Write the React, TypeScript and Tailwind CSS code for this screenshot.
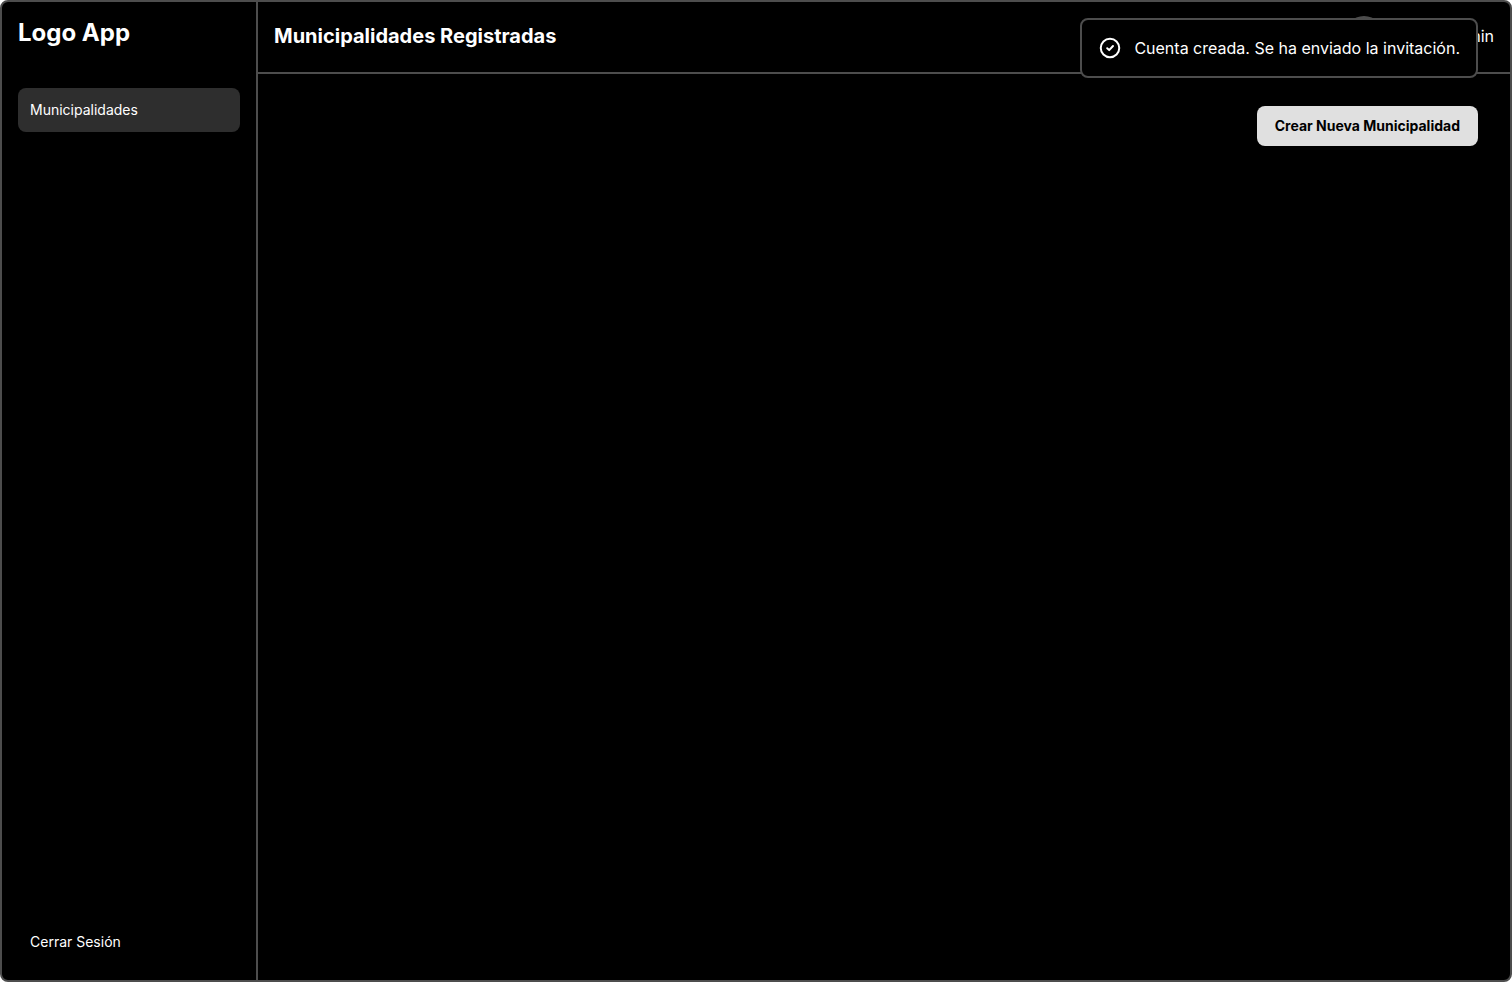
function CheckCircleIcon() {
  return (
    <svg
      aria-hidden="true"
      viewBox="0 0 24 24"
      className="size-6 shrink-0"
      fill="none"
      stroke="currentColor"
      strokeWidth="2"
      strokeLinecap="round"
      strokeLinejoin="round"
    >
      <circle cx="12" cy="12" r="9.25" />
      <path d="M9.2 12.2l2 1.9 3.8-4.1" />
    </svg>
  );
}

function Sidebar() {
  return (
    <aside className="flex w-64 shrink-0 flex-col border-r-2 border-[#4d4d4d] p-4">
      <div className="text-2xl font-bold leading-[30px]">Logo App</div>
      <nav className="mt-10">
        <a
          href="#municipalidades"
          aria-current="page"
          className="flex h-11 items-center rounded-lg bg-[#2e2e2e] px-3 text-sm"
        >
          Municipalidades
        </a>
      </nav>
      <button
        type="button"
        className="mt-auto flex h-11 items-center rounded-lg px-3 text-sm"
      >
        Cerrar Sesión
      </button>
    </aside>
  );
}

function Header() {
  return (
    <header className="flex h-18 shrink-0 items-center justify-between border-b-2 border-[#4d4d4d] px-4 pb-0.5">
      <h1 className="text-xl font-bold">Municipalidades Registradas</h1>
      <div className="flex items-center gap-3">
        <span className="size-10 rounded-full bg-[#4d4d4d]" />
        <span className="text-base">Super Admin</span>
      </div>
    </header>
  );
}

function Toast() {
  return (
    <div
      role="status"
      className="absolute right-8 top-4 flex h-15 items-center gap-3 rounded-lg border-2 border-[#4d4d4d] bg-black px-4 text-base"
    >
      <CheckCircleIcon />
      Cuenta creada. Se ha enviado la invitación.
    </div>
  );
}

export default function App() {
  return (
    <div className="min-h-screen bg-white font-['Inter',sans-serif] text-white">
      <div className="relative flex min-h-screen rounded-lg border-2 border-[#4d4d4d] bg-black">
        <Sidebar />
        <div className="flex min-w-0 flex-1 flex-col">
          <Header />
          <main className="flex flex-1 flex-col items-end p-8">
            <button
              type="button"
              className="h-10 rounded-lg bg-[#e0e0e0] px-[18px] text-sm font-bold text-black"
            >
              Crear Nueva Municipalidad
            </button>
          </main>
        </div>
        <Toast />
      </div>
    </div>
  );
}
